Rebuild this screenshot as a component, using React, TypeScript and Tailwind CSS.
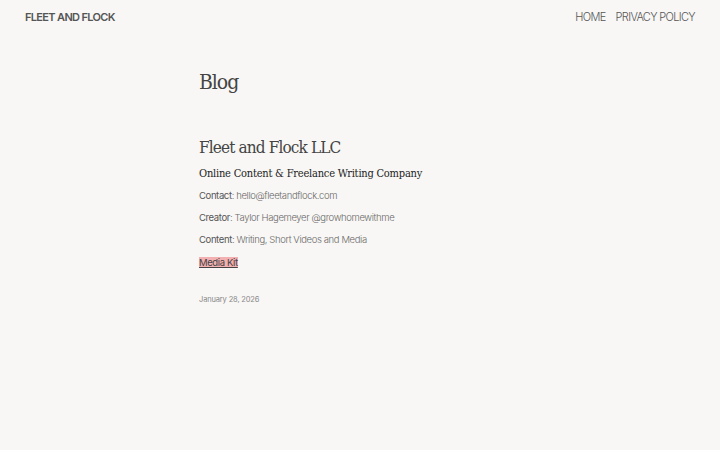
export default function App() {
  const serif = { fontFamily: '"DejaVu Serif Condensed", "DejaVu Serif", "Liberation Serif", serif' }
  return (
    <div className="min-h-[450px] bg-[#f8f7f5] text-[#555]" style={{ fontFamily: 'Inter, "Noto Sans", sans-serif' }}>
      <header className="flex items-center justify-between px-[25px] pt-[2px] h-[33px]">
        <div className="text-[11px] font-semibold tracking-[-0.06em] text-[#555]">FLEET AND FLOCK</div>
        <nav className="flex gap-[10px] text-[11px] font-light tracking-[-0.06em] text-[#555]">
          <span>HOME</span>
          <span>PRIVACY POLICY</span>
        </nav>
      </header>

      <main className="mx-auto w-[322px] pt-[36px]">
        <h1 className="text-[21px] font-light leading-[26px] tracking-[-0.05em] text-[#444]" style={serif}>Blog</h1>

        <article className="mt-[40px]">
          <h2 className="text-[17px] font-light leading-[24px] tracking-[-0.05em] text-[#444]" style={serif}>Fleet and Flock LLC</h2>
          <h3 className="mt-[6px] text-[11px] font-normal leading-[18px] tracking-[-0.02em] text-[#222]" style={serif}>
            Online Content &amp; Freelance Writing Company
          </h3>
          <div className="mt-[6px] flex flex-col gap-[8px] text-[9.5px] leading-[14px] tracking-[-0.04em] font-light text-[#6a6a6a]">
            <p><span className="font-normal text-[#555]">Contact</span>: hello@fleetandflock.com</p>
            <p><span className="font-normal text-[#555]">Creator</span>: Taylor Hagemeyer @growhomewithme</p>
            <p><span className="font-normal text-[#555]">Content</span>: Writing, Short Videos and Media</p>
            <p className="pt-px">
              <a className="bg-[#f3b0b0] font-normal text-[#444] underline underline-offset-[1px]">Media Kit</a>
            </p>
          </div>
          <div className="mt-[24px] text-[7.5px] tracking-[-0.02em] text-[#888]">January 28, 2026</div>
        </article>
      </main>
    </div>
  )
}
